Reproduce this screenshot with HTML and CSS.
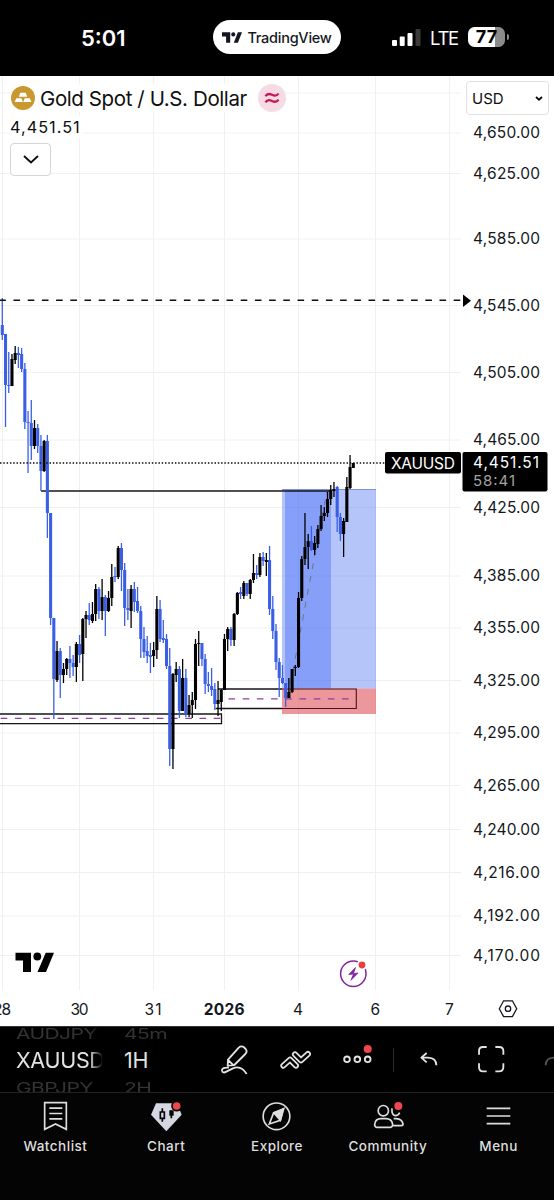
FILE: index.html
```html
<!DOCTYPE html>
<html lang="en">
<head>
  <meta charset="UTF-8">
  <title>XAUUSD - TradingView</title>
  <link rel="stylesheet" href="styles.css">
</head>
<body>
  <div class="app">
    <header class="status-bar">
      <div class="time">5:01</div>
      <div class="brand-pill">
        <svg class="brand-logo" viewBox="0 0 39 20"><path d="M0 0h16v20H8V8H0zM31 0h8l-8 20h-8z"/><circle cx="22" cy="4" r="4"/></svg>
        <span>TradingView</span>
      </div>
      <div class="status-right">
        <svg class="signal" viewBox="0 0 29 17">
          <rect x="0" y="11" width="5" height="6" rx="1"/>
          <rect x="7.7" y="7.5" width="5" height="9.5" rx="1"/>
          <rect x="15.5" y="4" width="5" height="13" rx="1"/>
          <rect class="off" x="23.5" y="0" width="5" height="17" rx="1"/>
        </svg>
        <span class="network">LTE</span>
        <div class="battery"><span>77</span></div>
      </div>
    </header>

    <main class="chart">
      <svg class="chart-canvas" viewBox="0 76 554 950">
        <g id="grid" class="grid"></g>
        <!-- position tool -->
        <rect class="profit" x="282" y="489" width="94" height="199.5"/>
        <rect class="profit-run" x="285" y="490" width="46" height="198.5"/>
        <path class="profit-edge" d="M282 489.5H376"/>
        <rect class="loss" x="282" y="688.5" width="94" height="25.5"/>
        <path class="trend" d="M288 697L327 491"/>
        <!-- zones and levels -->
        <path class="level" d="M41 491H330"/>
        <path class="zone" d="M0 714H221.5V723.7H0M282 689H218M215.5 708.5H282"/>
        <path class="zone-front" d="M282 689H356.3V708.5H282"/>
        <path class="zone-mid" d="M0.7 718.3H221"/>
        <path class="zone-mid" d="M228.5 698.8H350"/>
        <g id="candles"></g>
        <path class="level-dashed" d="M-.7 300.3H463"/>
        <path d="M463 294.5L471 300.7L463 307z"/>
        <path class="last-price" d="M0 463H386"/>
        <!-- price label -->
        <rect x="385" y="452" width="76" height="21.5" rx="2"/>
        <rect x="462.5" y="452" width="85" height="39.5" rx="2"/>
        <text class="tag" x="391" y="469" textLength="64">XAUUSD</text>
        <text class="tag price-tag" x="473" y="467.5" textLength="66">4,451.51</text>
        <text class="countdown" x="473" y="485.5" textLength="42">58:41</text>
        <g id="priceAxis" class="axis"></g>
        <g class="axis">
          <text x="-7" y="1014.9" textLength="18">28</text>
          <text x="70.5" y="1014.9" textLength="18">30</text>
          <text x="144.5" y="1014.9" textLength="17">31</text>
          <text class="year" x="203.7" y="1014.9" textLength="41">2026</text>
          <text x="293" y="1014.9">4</text>
          <text x="370.5" y="1014.9">6</text>
          <text x="445" y="1014.9">7</text>
        </g>
        <path d="M15.500 952.8H31V972H23V960.5H15.5zM45.7 952.8H54L46 972H37.5z"/>
        <circle cx="37.3" cy="956.5" r="3.9"/>
        <circle class="event" cx="353.3" cy="973.8" r="12.7"/>
        <circle class="event-dot" cx="362" cy="965" r="4.4"/>
        <path class="bolt" d="M355.5 967.5L348.8 974.5L353.5 974L351 980.3L358 973.1L353.4 973.4z"/>
        <path class="hex" d="M499.3 1008.7L503.6 1000.8H512.4L516.7 1008.7L512.4 1016.6H503.6zM510.7 1008.7a2.7 2.7 0 1 0-5.4 0a2.7 2.7 0 1 0 5.4 0"/>
      </svg>

      <div class="legend">
        <div class="legend-title">
          <svg class="gold" viewBox="0 0 24 24"><circle cx="12" cy="12" r="12"/><path d="M9.300 6.800h5.400l1.500 3.900h-8.400zM5.300 12.200h5l1.700 3.900H3.600zM13.700 12.200h5l1.700 3.900h-8.100z"/></svg>
          <h1>Gold Spot / U.S. Dollar</h1>
          <svg class="approx" viewBox="0 0 28 28"><circle cx="14" cy="14" r="14"/><path d="M7.500 12.200c1.500-2.700 3.500-2.800 6.500-1.400s4.800 1.200 6.500-1.300M7.500 18.400c1.500-2.700 3.500-2.800 6.500-1.400s4.800 1.200 6.500-1.300"/></svg>
        </div>
        <div class="legend-price">4,451.51</div>
        <button class="collapse"><svg viewBox="0 0 16 9"><path d="M1 1l7 6.5L15 1"/></svg></button>
      </div>
      <button class="currency">USD<svg viewBox="0 0 8 5"><path d="M1 1l3 2.7L7 1"/></svg></button>
    </main>

    <div class="toolbar">
      <div class="picker symbol">
        <span class="ghost">AUDJPY</span><span class="current">XAUUSD</span><span class="ghost">GBPJPY</span>
      </div>
      <div class="picker interval">
        <span class="ghost">45m</span><span class="current">1H</span><span class="ghost">2H</span>
      </div>
      <svg class="tool draw" viewBox="0 0 80 90"><path d="M20 62L21 44L54 7Q61 1 69 7L74 12Q80 19 73 27L40 60zM21 45L38 61M24 68Q2 66 3 77Q5 86 16 80L36 70Q60 60 77 87"/></svg>
      <svg class="tool patterns" viewBox="0 0 94 58">
        <g class="outer"><path d="M10 47L30 29L48 47"/><path d="M45 13L63 31L84 12"/></g>
        <g class="inner"><path d="M10 47L30 29L48 47"/><path d="M45 13L63 31L84 12"/></g>
      </svg>
      <svg class="tool more" viewBox="0 0 86 86"><circle cx="12" cy="43" r="8.5"/><circle cx="43" cy="43" r="8.5"/><circle cx="74" cy="43" r="8.5"/><circle class="badge" cx="74" cy="12" r="12"/></svg>
      <div class="divider"></div>
      <svg class="tool undo" viewBox="0 0 54 44"><path d="M20 3L4 17L20 31M5 17H24Q49 18 49 40"/></svg>
      <svg class="tool fullscreen" viewBox="0 0 80 80"><path d="M3 26V15Q3 3 15 3H26M52 3H63Q76 3 76 15V26M76 52V63Q76 76 63 76H52M26 76H15Q3 76 3 63V52"/></svg>
      <svg class="tool redo" viewBox="0 0 54 44"><path d="M34 3L50 17L34 31M49 17H30Q5 18 5 40"/></svg>
    </div>

    <nav class="nav">
      <a class="nav-item">
        <svg viewBox="116 244 99 93"><path d="M133 249H198V329L165.500 313L133 329zM147 265.500H186M147 281.500H186M147 297.500H186"/></svg>
        <span>Watchlist</span>
      </a>
      <a class="nav-item">
        <svg viewBox="449 244 99 93"><path class="gem" d="M467 251H530L544 285L498 335L452 285z"/><path class="bars" d="M486 266V306M513 272V296"/><path class="bars box" d="M480 277H492V296H480z"/><rect class="bar-fill" x="507" y="272" width="13" height="16"/><circle class="badge ring" cx="529" cy="259" r="14"/></svg>
        <span>Chart</span>
      </a>
      <a class="nav-item">
        <svg viewBox="0 0 99 93"><circle cx="49.500" cy="46" r="40"/><path d="M70 24L61 58L28 69L41 35z"/><path class="needle" d="M71 23L61 58L42 36z"/></svg>
        <span>Explore</span>
      </a>
      <a class="nav-item">
        <svg viewBox="282 244 99 93"><circle cx="319" cy="273" r="15.500"/><path d="M293 314Q295 297 312 297H327Q344 297 347 314Q347 323 340 323H299Q293 323 293 314zM345 266Q343 286 355 288Q364 288 368 279M350 297H358Q375 298 378 313Q378 318 373 318H349"/><circle class="badge" cx="364" cy="259" r="12"/></svg>
        <span>Community</span>
      </a>
      <a class="nav-item">
        <svg viewBox="614 244 99 93"><path d="M628 266H699M628 289H699M628 312H699"/></svg>
        <span>Menu</span>
      </a>
    </nav>
  </div>
  <script src="chart.js"></script>
</body>
</html>
```
FILE: styles.css
```css
body {
  margin: 0;
  background: #000;
  color: #0f0f0f;
  font-family: Inter, "Liberation Sans", sans-serif;
}
.app {
  width: 554px;
  height: 1200px;
  display: flex;
  flex-direction: column;
  overflow: hidden;
}
svg {
  display: block;
  flex: none;
}
button {
  font-family: inherit;
  color: inherit;
  background: #fff;
  padding: 0;
  box-sizing: border-box;
}

/* status bar */
.status-bar {
  height: 76px;
  box-sizing: border-box;
  padding: 20px 46px 22px 81px;
  display: flex;
  align-items: center;
  background: #000;
  color: #fff;
}
.time {
  width: 132px;
  padding-top: 1px;
  font-size: 22px;
  font-weight: 600;
  letter-spacing: 0;
}
.brand-pill {
  width: 128px;
  height: 34px;
  border-radius: 17px;
  background: #fff;
  color: #131722;
  display: flex;
  align-items: center;
  justify-content: center;
  gap: 5px;
  font-size: 14.5px;
  font-weight: 500;
  letter-spacing: -0.25px;
}
.brand-logo {
  width: 20px;
  height: 11px;
  fill: #131722;
}
.status-right {
  margin-left: auto;
  display: flex;
  align-items: center;
}
.signal {
  width: 29px;
  height: 17px;
  fill: #fff;
}
.signal .off {
  fill: #3b3b3b;
}
.network {
  width: 38px;
  margin-left: 9px;
  padding-top: 2px;
  font-size: 18.5px;
  letter-spacing: -1.3px;
}
.battery {
  width: 37px;
  height: 20px;
  border-radius: 6.5px;
  background: linear-gradient(90deg, #fff 27px, #8b8b8b 27px);
  color: #000;
  text-align: center;
  font-size: 18px;
  line-height: 20px;
  font-weight: 700;
  margin-right: 3px;
  position: relative;
}
.battery::after {
  content: "";
  position: absolute;
  right: -4px;
  top: 7px;
  width: 2px;
  height: 6px;
  border-radius: 0 2px 2px 0;
  background: #8b8b8b;
}

/* chart */
.chart {
  position: relative;
  height: 950px;
  background: #fff;
}
.chart-canvas {
  width: 554px;
  height: 950px;
}
.grid path {
  stroke: #f0f0f0;
  stroke-width: 1;
}
.profit {
  fill: #3a62ee;
  fill-opacity: 0.37;
}
.profit-run {
  fill: #3f66fb;
  fill-opacity: 0.4;
}
.profit-edge {
  stroke: #7c91d8;
}
.loss {
  fill: #d9303a;
  fill-opacity: 0.5;
}
.level, .zone, .zone-front {
  fill: none;
  stroke: #16161a;
  stroke-width: 1.3;
}
.zone-front {
  stroke: #4d1218;
  stroke-width: 1.1;
}
.zone-mid {
  stroke: #8d3fa5;
  stroke-width: 1.3;
  stroke-dasharray: 6.6 7.6;
}
.trend {
  stroke: #6d7385;
  stroke-width: 1;
  stroke-dasharray: 6 7;
}
.level-dashed {
  stroke: #0f0f0f;
  stroke-width: 1.4;
  stroke-dasharray: 6.6 7.6;
}
.last-price {
  stroke: #0f0f0f;
  stroke-width: 1.3;
  stroke-dasharray: 1.5 1.8;
}
.wick {
  stroke-width: 1.3;
  fill: none;
}
.up {
  stroke: #000;
}
.down {
  stroke: #3a5fe6;
}
.body {
  stroke-width: 3.1;
}
.axis text {
  font-size: 15.5px;
  fill: #131722;
}
.axis .year {
  font-weight: 700;
}
.tag {
  font-size: 15.5px;
  fill: #fff;
}
.countdown {
  font-size: 15px;
  fill: #a3a3a3;
}
.event {
  fill: none;
  stroke: #8425a0;
  stroke-width: 1.5;
}
.event-dot {
  fill: #e8403f;
  stroke: #fff;
  stroke-width: 2;
}
.bolt {
  fill: #8425a0;
  stroke: #8425a0;
  stroke-width: 0.8;
}
.hex {
  fill: none;
  stroke: #131722;
  stroke-width: 1.3;
}

.legend {
  position: absolute;
  left: 10px;
  top: 8px;
  display: flex;
  flex-direction: column;
  align-items: flex-start;
}
.legend-title {
  display: flex;
  align-items: center;
  height: 28px;
  background: #fff;
}
.legend-title h1 {
  margin: 0 0 0 5px;
  width: 209px;
  font-size: 20.5px;
  font-weight: 400;
  letter-spacing: -0.4px;
  white-space: nowrap;
}
.gold {
  width: 24px;
  height: 24px;
  margin-left: 1px;
  fill: #c9982e;
}
.gold path {
  fill: #fff;
}
.approx {
  width: 28px;
  height: 28px;
  margin-left: 9px;
  fill: #f6dbe4;
}
.approx path {
  fill: none;
  stroke: #c2185b;
  stroke-width: 2.2;
}
.legend-price {
  height: 22px;
  margin-top: 4px;
  padding: 0 2px 0 0;
  background: #fff;
  font-size: 16.3px;
  line-height: 22px;
  letter-spacing: 1px;
}
.collapse {
  margin-top: 5px;
  width: 41px;
  height: 33px;
  border: 1px solid #d5d5d5;
  border-radius: 4px;
  display: flex;
  align-items: center;
  justify-content: center;
}
.collapse svg {
  width: 16px;
  height: 9px;
}
.collapse path, .currency path {
  fill: none;
  stroke: #0f0f0f;
  stroke-width: 1.9;
}
.currency {
  position: absolute;
  left: 466px;
  top: 5px;
  width: 83px;
  height: 34px;
  padding: 0 5px;
  border: 1px solid #e2e2e2;
  border-radius: 4px;
  display: flex;
  align-items: center;
  justify-content: space-between;
  font-size: 15px;
}
.currency svg {
  width: 8px;
  height: 5px;
}

/* toolbar */
.toolbar {
  height: 67px;
  box-sizing: border-box;
  display: flex;
  align-items: center;
  overflow: hidden;
  background: #000;
  border-top: 1px solid #333;
  border-bottom: 1px solid #222;
  color: #e3e3e3;
}
.toolbar > * {
  flex: none;
}
.picker {
  height: 65px;
  display: flex;
  flex-direction: column;
  align-items: flex-start;
  justify-content: center;
  overflow: hidden;
  font-size: 21.5px;
  line-height: 27px;
  padding-top: 2px;
  box-sizing: border-box;
}
.symbol {
  width: 87px;
  margin-left: 16px;
  -webkit-mask-image: linear-gradient(90deg, #000 84%, transparent 100%);
  mask-image: linear-gradient(90deg, #000 84%, transparent 100%);
}
.interval {
  width: 97px;
  margin-left: 21px;
}
.current {
  letter-spacing: -0.3px;
}
.ghost {
  color: #333;
  font-size: 21px;
  letter-spacing: -0.6px;
  transform: scaleY(0.7);
}
.tool {
  fill: none;
  stroke: #e3e3e3;
  stroke-width: 5.500;
  stroke-linejoin: round;
}
.draw {
  width: 26.7px;
  height: 30px;
}
.patterns {
  width: 31.3px;
  height: 19.3px;
  margin-left: 32.5px;
}
.patterns path {
  stroke-linecap: round;
}
.outer {
  stroke-width: 18;
}
.inner {
  stroke: #000;
  stroke-width: 7.5;
}
.more {
  width: 28.7px;
  height: 28.7px;
  margin-left: 31.7px;
}
.badge {
  fill: #f04650;
  stroke: none;
}
.divider {
  width: 1px;
  height: 24px;
  margin-left: 21px;
  background: #2b2b2b;
}
.undo, .redo {
  width: 18px;
  height: 14.7px;
}
.undo {
  margin-left: 26.5px;
}
.fullscreen {
  width: 26.7px;
  height: 26.7px;
  margin-left: 40px;
}
.redo {
  margin-left: 39px;
  stroke: #555;
}

/* bottom navigation */
.nav {
  height: 107px;
  display: flex;
  background: #040404;
  color: #dedede;
}
.nav-item {
  flex: 1;
  display: flex;
  flex-direction: column;
  align-items: center;
  padding-top: 8px;
  font-size: 13.5px;
  font-weight: 500;
  letter-spacing: 0.5px;
}
.nav-item svg {
  width: 33px;
  height: 31px;
  fill: none;
  stroke: #dedede;
  stroke-width: 5;
}
.nav-item span {
  margin-top: 6px;
  line-height: 17px;
}
.nav-item .gem {
  fill: #d5d7e2;
  stroke: none;
}
.nav-item .bars {
  stroke: #040404;
}
.nav-item .bars.box {
  fill: #d5d7e2;
}
.nav-item .bar-fill {
  fill: #040404;
  stroke: none;
}
.nav-item .badge {
  stroke: none;
}
.nav-item .badge.ring {
  stroke: #040404;
}
.nav-item .needle {
  fill: #dedede;
}
```
FILE: chart.js
```js
var NS = 'http://www.w3.org/2000/svg';

function add(parent, tag, attrs, text) {
  var el = document.createElementNS(NS, tag);
  for (var key in attrs) el.setAttribute(key, attrs[key]);
  if (text) el.textContent = text;
  parent.appendChild(el);
}

var prices = [
  ['4,650.00', 133], ['4,625.00', 173.5], ['4,585.00', 239], ['4,545.00', 305.5],
  ['4,505.00', 372.5], ['4,465.00', 440], ['4,425.00', 507.5], ['4,385.00', 576],
  ['4,355.00', 628], ['4,325.00', 680.5], ['4,295.00', 733], ['4,265.00', 785.5],
  ['4,240.00', 829.5], ['4,216.00', 872.5], ['4,192.00', 916], ['4,170.00', 955.5]
];
var days = [2.5, 79.5, 153.5, 224.5, 298.5, 375.5, 449.5];

var grid = document.getElementById('grid');
var axis = document.getElementById('priceAxis');
add(grid, 'path', { d: 'M0 93H461' });
prices.forEach(function (p) {
  add(grid, 'path', { d: 'M0 ' + p[1] + 'H461' });
  add(axis, 'text', { x: 473, y: p[1] + 5, textLength: 67 }, p[0]);
});
days.forEach(function (x) {
  add(grid, 'path', { d: 'M' + x + ' 76V990' });
});

// [high, low, body top, body bottom, rising]
var candles = [
  [298,340,325,335,0],[334,427,334,385,0],[352,393,385,386,0],[354,386,359,386,1],[346,364,353,360,1],
  [347,368,353,355,0],[348,372,354,369,0],[363,429,369,422,0],[411,473,422,423,0],[400,460,423,446,0],
  [420,449,428,446,1],[424,453,428,446,0],[435,491,446,471,0],[440,472,441,471,1],[435,538,441,513,0],
  [513,625,513,618,0],[618,719,618,679,0],[641,682,651,680,1],[648,698,651,675,0],[663,683,669,675,1],
  [658,675,659,669,1],[646,678,659,663,0],[655,676,663,667,0],[642,682,644,667,1],[635,663,644,655,0],
  [618,681,619,654,1],[611,638,615,619,1],[603,625,615,620,0],[602,623,614,621,1],[584,621,589,614,1],
  [587,619,589,611,0],[579,620,597,611,1],[595,636,597,611,0],[591,612,598,611,1],[564,606,577,598,1],
  [567,582,576,577,0],[546,579,548,577,1],[543,591,548,570,0],[563,626,570,608,0],[589,620,608,610,0],
  [585,628,589,611,1],[582,612,589,602,0],[587,613,601,611,0],[606,658,611,639,0],[627,658,639,652,0],
  [636,663,651,656,0],[643,673,655,657,0],[642,667,650,656,1],[596,659,609,650,1],[600,642,609,639,0],
  [620,643,638,640,0],[634,669,639,666,0],[648,766,666,749,0],[673,769,674,749,1],[662,682,669,675,1],
  [666,718,669,711,0],[659,711,678,711,1],[669,717,678,714,0],[695,717,705,714,1],[692,718,700,705,1],
  [639,709,644,700,1],[631,666,643,644,1],[643,666,643,659,0],[654,694,659,684,0],[672,692,684,686,0],
  [668,696,686,690,0],[683,710,689,704,0],[681,716,700,704,1],[689,711,690,702,1],[634,690,639,690,1],
  [627,651,629,639,1],[627,646,629,640,0],[613,646,614,640,1],[592,615,593,614,1],[587,599,592,594,0],
  [581,599,583,596,1],[583,596,583,594,0],[579,599,580,594,1],[554,583,573,580,1],[565,579,573,575,0],
  [553,577,557,575,1],[552,566,557,561,0],[553,576,560,562,1],[546,615,560,609,0],[596,639,609,631,0],
  [624,670,631,662,0],[658,697,662,678,0],[665,684,678,683,0],[683,707,683,698,0],[678,698,692,698,1],
  [669,693,669,692,1],[665,676,667,668,1],[592,668,598,667,1],[556,601,559,598,1],[513,565,547,559,1],
  [534,569,541,547,1],[526,551,541,550,0],[536,555,543,550,1],[525,548,529,544,1],[505,531,516,529,1],
  [507,521,513,516,1],[492,517,499,513,1],[485,505,490,499,1],[482,497,489,491,1],[486,532,487,517,0],
  [513,541,517,534,0],[518,557,521,534,1],[477,522,487,522,1],[455,489,467,488,1],[463,468,463,468,1]
];

var group = document.getElementById('candles');
candles.forEach(function (c, i) {
  var x = (2.3 + 3.22 * i).toFixed(2);
  var side = c[4] ? 'up' : 'down';
  add(group, 'path', { 'class': 'wick ' + side, d: 'M' + x + ' ' + c[0] + 'V' + c[1] });
  add(group, 'path', { 'class': 'body ' + side, d: 'M' + x + ' ' + c[2] + 'V' + c[3] });
});
```
